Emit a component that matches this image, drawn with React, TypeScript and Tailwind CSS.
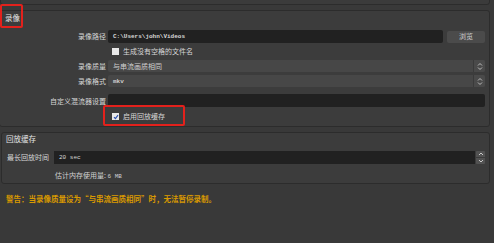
import React from 'react';

const font = { fontFamily: '"Noto Sans CJK SC", "Noto Sans", sans-serif' };
const mono = { fontFamily: '"Liberation Mono", monospace' };

function Label({ children, className = '' }: { children: React.ReactNode; className?: string }) {
  return <div className={`w-[108px] shrink-0 pr-[2px] text-right text-[7px] leading-none text-[#d6d6d6] ${className}`}>{children}</div>;
}

function Chevrons() {
  return (
    <svg width="6" height="9" viewBox="0 0 6 9" fill="none" stroke="#bdbdbd" strokeWidth="1">
      <path d="M1 3.5 L3 1.5 L5 3.5" />
      <path d="M1 5.5 L3 7.5 L5 5.5" />
    </svg>
  );
}

function SelectBox({ children }: { children: React.ReactNode }) {
  return (
    <div className="flex h-full flex-1 items-stretch rounded-[2px] bg-[#474747]">
      <div className="flex flex-1 items-center pl-[5px] text-[7px] text-[#d0d0d0]">{children}</div>
      <div className="flex w-[12px] items-center justify-center rounded-r-[2px] border-l border-[#3a3a3a] bg-[#4a4a4a]">
        <Chevrons />
      </div>
    </div>
  );
}

function Check({ checked }: { checked?: boolean }) {
  return (
    <div className="flex h-[7px] w-[7px] items-center justify-center bg-[#e8e8e8]">
      {checked && (
        <svg width="6" height="6" viewBox="0 0 6 6" fill="none" stroke="#2a4fb0" strokeWidth="1.2">
          <path d="M1 3.2 L2.4 4.6 L5 1.2" />
        </svg>
      )}
    </div>
  );
}

export default function App() {
  return (
    <div className="relative h-[243px] w-[494px] overflow-hidden bg-[#393939]" style={font}>
      {/* previous panel stub */}
      <div className="-mt-[4px] mr-[4px] h-[9px] rounded-b-[3px] border border-[#2c2c2c] bg-[#3b3b3b]" />

      {/* 录像 panel */}
      <div className="-ml-[1px] mr-[4px] mt-[5px] h-[117px] rounded-[3px] border border-[#2c2c2c] bg-[#3c3c3c]">
        <div className="flex h-[13px] items-center pl-[5px] text-[7.5px] text-[#e4e4e4]">录像</div>
        <div className="mt-[6px] flex h-[13px] items-center">
          <Label>录像路径</Label>
          <div className="flex h-full flex-1 items-center rounded-[2px] bg-[#212121] pl-[5px] text-[6px] font-bold text-[#d8d8d8]" style={mono}>
            C:\Users\john\Videos
          </div>
          <div className="ml-[4px] mr-[4px] flex h-[12px] w-[38px] items-center justify-center rounded-[2px] bg-[#4b4b4b] text-[7px] text-[#cfcfcf]">浏览</div>
        </div>
        <div className="mt-[2px] flex h-[13px] items-center gap-[4px] pl-[112px]">
          <Check />
          <span className="text-[7px] text-[#d6d6d6]">生成没有空格的文件名</span>
        </div>
        <div className="mt-[2px] flex h-[12px] items-center pr-[4px]">
          <Label>录像质量</Label>
          <SelectBox>与串流画质相同</SelectBox>
        </div>
        <div className="mt-[3px] flex h-[12px] items-center pr-[4px]">
          <Label>录像格式</Label>
          <SelectBox>
            <span className="text-[6px] font-bold" style={mono}>mkv</span>
          </SelectBox>
        </div>
        <div className="mt-[7px] flex h-[13px] items-center pr-[4px]">
          <Label className="pt-[2px]">自定义混流器设置</Label>
          <div className="h-full flex-1 rounded-[2px] bg-[#212121]" />
        </div>
        <div className="mt-[3px] flex h-[13px] items-center gap-[4px] pl-[112px]">
          <Check checked />
          <span className="text-[7px] text-[#d6d6d6]">启用回放缓存</span>
        </div>
      </div>

      {/* 回放缓存 panel */}
      <div className="ml-[1px] mr-[4px] mt-[5px] h-[52px] rounded-[3px] border border-[#2c2c2c] bg-[#3c3c3c]">
        <div className="flex h-[11px] items-center pl-[4px] text-[7.5px] text-[#e4e4e4]">回放缓存</div>
        <div className="mt-[7px] flex h-[13px] items-center pr-[4px]">
          <div className="w-[52px] shrink-0 pl-[5px] text-[7px] text-[#d6d6d6]">最长回放时间</div>
          <div className="flex h-full flex-1 items-center bg-[#212121] pl-[5px] text-[6px] text-[#d8d8d8]" style={mono}>
            20 sec
          </div>
          <div className="ml-[1px] flex h-full w-[9px] flex-col gap-[1px]">
            <div className="flex flex-1 items-center justify-center rounded-t-[1px] bg-[#525252]">
              <svg width="6" height="4" viewBox="0 0 6 4" fill="none" stroke="#c8c8c8" strokeWidth="1"><path d="M1 3 L3 1 L5 3" /></svg>
            </div>
            <div className="flex flex-1 items-center justify-center rounded-b-[1px] bg-[#525252]">
              <svg width="6" height="4" viewBox="0 0 6 4" fill="none" stroke="#c8c8c8" strokeWidth="1"><path d="M1 1 L3 3 L5 1" /></svg>
            </div>
          </div>
        </div>
        <div className="mt-[6px] pl-[53px] text-[7px] text-[#d0d0d0]">
          估计内存使用量: <span className="text-[6px]" style={mono}>6 MB</span>
        </div>
      </div>

      <div className="mt-[9px] pl-[6px] text-[7.5px] font-bold text-[#d99a00]">
        警告：当录像质量设为“与串流画质相同”时，无法暂停录制。
      </div>

      {/* annotation highlights */}
      <div className="absolute left-0 top-[4px] h-[24px] w-[23px] rounded-[2px] border-2 border-[#e3211c]" />
      <div className="absolute left-[103px] top-[105px] h-[21px] w-[82px] rounded-[2px] border-2 border-[#e3211c]" />
    </div>
  );
}
